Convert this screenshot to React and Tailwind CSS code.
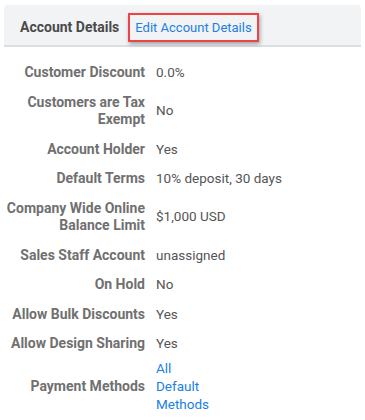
import React from "react";

const rows = [
  ["Customer Discount", "0.0%"],
  ["Customers are Tax Exempt", "No"],
  ["Account Holder", "Yes"],
  ["Default Terms", "10% deposit, 30 days"],
  ["Company Wide Online Balance Limit", "$1,000 USD"],
  ["Sales Staff Account", "unassigned"],
  ["On Hold", "No"],
  ["Allow Bulk Discounts", "Yes"],
  ["Allow Design Sharing", "Yes"],
];

export default function App() {
  return (
    <div className="w-[365px] h-[420px] bg-white overflow-hidden" style={{ fontFamily: "Roboto, 'Liberation Sans', sans-serif" }}>
      <div className="pt-[5px] px-[4px]">
        <div className="flex items-center h-[42px] bg-[#f2f3f5] rounded-t-[4px] border-b-2 border-[#dcdee2] pl-[16px] pt-[4px]">
          <span className="text-[14px] font-bold text-[#4a4a4a]">Account Details</span>
          <span className="ml-[9px] pl-[5px] pr-[5px] py-[4px] border-[2px] border-[#ec4449] shadow-[1px_2px_4px_rgba(0,0,0,0.35)] text-[13px] text-[#1c7fe3] leading-[17px]">
            Edit Account Details
          </span>
        </div>
        <div className="pt-[11px]">
          {rows.map(([k, v]) => (
            <div key={k} className="flex items-center py-[6px] text-[14px] leading-[17.5px]">
              <div className="w-[141px] text-right font-bold text-[#707070]">{k}</div>
              <div className="ml-[11px] text-[13.5px] text-[#555555]">{v}</div>
            </div>
          ))}
          <div className="flex items-center text-[14px] leading-[18px]">
            <div className="w-[141px] text-right font-bold text-[#707070]">Payment Methods</div>
            <div className="ml-[11px] w-[56px] text-[13.5px] text-[#1c7fe3]">All Default Methods</div>
          </div>
        </div>
      </div>
    </div>
  );
}
